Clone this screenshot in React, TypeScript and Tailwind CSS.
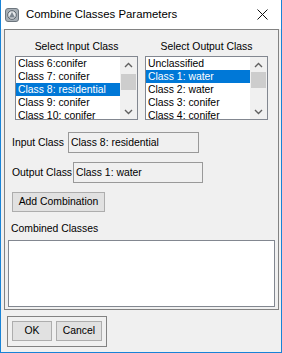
import React from 'react';

const inputItems = ['Class 6:conifer', 'Class 7: conifer', 'Class 8: residential', 'Class 9: conifer', 'Class 10: conifer'];
const outputItems = ['Unclassified', 'Class 1: water', 'Class 2: water', 'Class 3: conifer', 'Class 4: conifer'];

function Chevron({ up }: { up?: boolean }) {
  return (
    <svg width="9" height="6" viewBox="0 0 9 6">
      <path d={up ? 'M1 5 L4.5 1.5 L8 5' : 'M1 1 L4.5 4.5 L8 1'} fill="none" stroke="#606060" strokeWidth="1.4" />
    </svg>
  );
}

function ListBox({ items, selected, thumbTop }: { items: string[]; selected: number; thumbTop: string }) {
  return (
    <div className="flex h-[64px] w-[123px] border border-[#828790] bg-white">
      <div className="flex-1 overflow-hidden">
        {items.map((item, i) => (
          <div
            key={item}
            className={
              i === selected
                ? 'h-[13px] whitespace-nowrap bg-[#0078d7] px-[2px] leading-[13px] text-white'
                : 'h-[13px] whitespace-nowrap px-[2px] leading-[13px] text-black'
            }
          >
            {item}
          </div>
        ))}
      </div>
      <div className="flex w-[17px] flex-col bg-[#f0f0f0]">
        <div className="flex h-[15px] items-center justify-center">
          <Chevron up />
        </div>
        <div className={`mx-[1px] h-[16px] bg-[#cdcdcd] ${thumbTop}`} />
        <div className="flex-1" />
        <div className="flex h-[15px] items-center justify-center">
          <Chevron />
        </div>
      </div>
    </div>
  );
}

export default function App() {
  return (
    <div className="flex h-[353px] w-[282px] flex-col border-b border-l border-r border-[#1883d7] bg-[#f0f0f0] font-['Liberation_Sans',Arial,sans-serif] text-[10.4px] text-black">
      {/* title bar */}
      <div className="flex h-[29px] items-center bg-white">
        <svg className="ml-[4px]" width="14" height="14" viewBox="0 0 14 14">
          <rect x="0.5" y="0.5" width="13" height="13" rx="2.5" fill="#a7afb6" stroke="#6d767e" />
          <circle cx="7" cy="7" r="4.3" fill="#e6e9ec" stroke="#59626a" strokeWidth="1" />
          <path d="M4 9.5 L7 4 L10 9.5 Z" fill="#7c868f" />
        </svg>
        <span className="ml-[7px] text-[11.4px]">Combine Classes Parameters</span>
        <svg className="ml-auto mr-[13px]" width="11" height="11" viewBox="0 0 11 11">
          <path d="M0.5 0.5 L10.5 10.5 M10.5 0.5 L0.5 10.5" stroke="#111" strokeWidth="1" />
        </svg>
      </div>

      {/* main panel */}
      <div className="ml-[3px] flex h-[281px] w-[275px] flex-col border border-[#828282]">
        <div className="mt-[10px] flex gap-[7px] pl-[10px]">
          <div className="flex flex-col items-center">
            <div className="mb-[3px] h-[13px] leading-[13px]">Select Input Class</div>
            <ListBox items={inputItems} selected={2} thumbTop="mt-[2px]" />
          </div>
          <div className="flex flex-col items-center">
            <div className="mb-[3px] h-[13px] leading-[13px]">Select Output Class</div>
            <ListBox items={outputItems} selected={1} thumbTop="mt-0" />
          </div>
        </div>

        <div className="mt-[12px] flex items-center pl-[7px]">
          <div className="w-[56px] leading-[13px]">Input Class</div>
          <div className="flex h-[21px] w-[131px] items-center border border-[#999999] bg-[#f0f0f0] pl-[2px]">
            Class 8: residential
          </div>
        </div>

        <div className="mt-[9px] flex items-center pl-[7px]">
          <div className="w-[61px] leading-[13px]">Output Class</div>
          <div className="flex h-[21px] w-[130px] items-center border border-[#999999] bg-[#f0f0f0] pl-[2px]">
            Class 1: water
          </div>
        </div>

        <div className="mt-[9px] pl-[7px]">
          <button className="flex h-[20px] w-[93px] items-center justify-center border border-[#adadad] bg-[#e1e1e1]">
            Add Combination
          </button>
        </div>

        <div className="mt-[10px] pl-[6px] leading-[13px]">Combined Classes</div>

        <div className="ml-[3px] mt-[5px] h-[67px] w-[267px] border border-[#828790] bg-white" />
      </div>

      {/* bottom buttons */}
      <div className="ml-[6px] mt-[6px] flex h-[31px] w-[100px] gap-[4px] border border-[#828282] pl-[4px] pt-[4px]">
        <button className="flex h-[20px] w-[40px] items-center justify-center border border-[#adadad] bg-[#e1e1e1]">OK</button>
        <button className="flex h-[20px] w-[46px] items-center justify-center border border-[#adadad] bg-[#e1e1e1]">Cancel</button>
      </div>
    </div>
  );
}
